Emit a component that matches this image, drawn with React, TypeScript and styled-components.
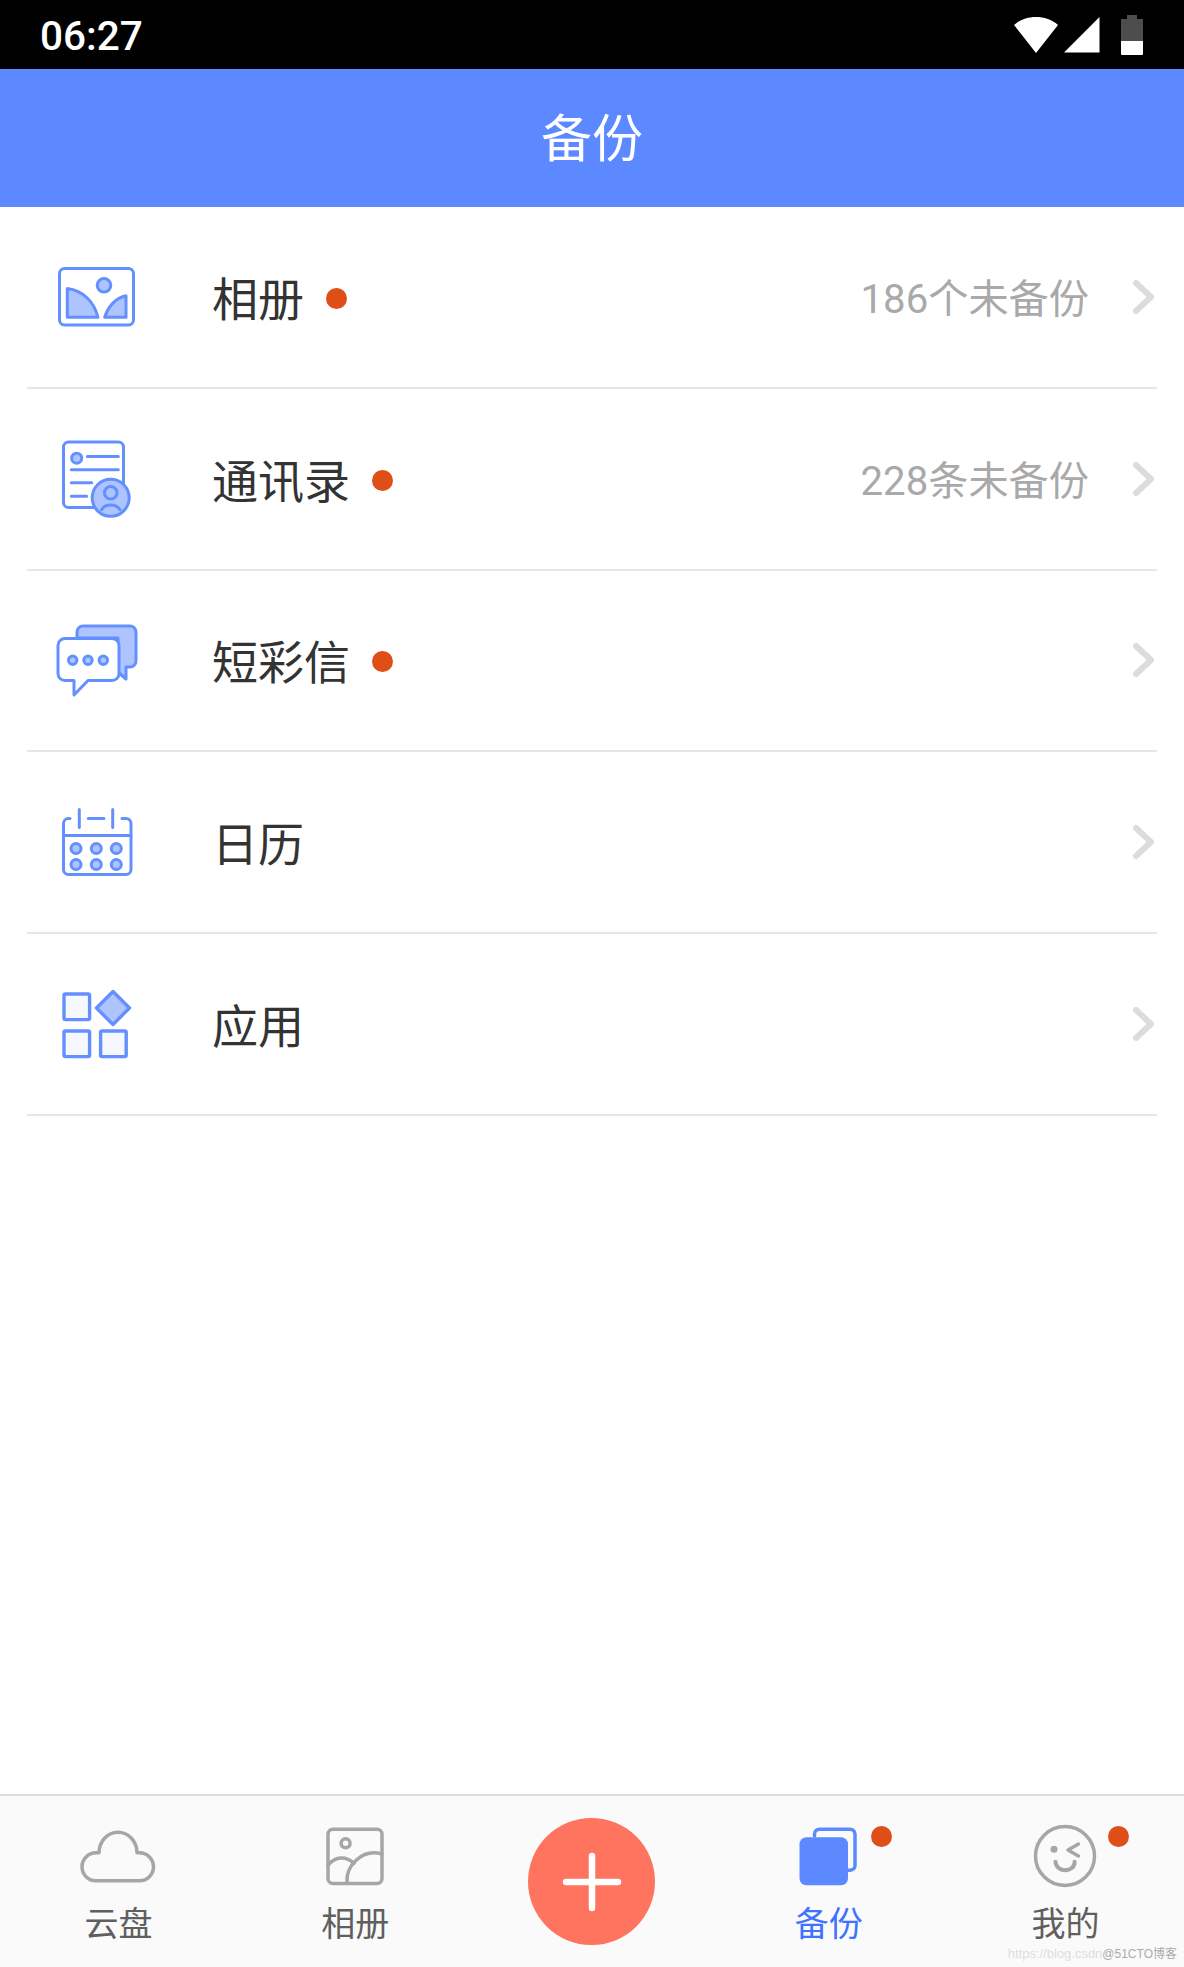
import React from 'react';
import styled, { createGlobalStyle } from 'styled-components';

const GlobalStyle = createGlobalStyle`
    html, body {
        margin: 0;
        padding: 0;
        background: #fff;
    }
    * {
        box-sizing: border-box;
    }
`;

const Page = styled.div`
    width: 1184px;
    height: 1967px;
    position: relative;
    display: flex;
    flex-direction: column;
    overflow: hidden;
    background: #fff;
    font-family: Roboto, "Noto Sans CJK SC", sans-serif;
`;

const StatusBar = styled.div`
    height: 69px;
    flex: none;
    display: flex;
    align-items: center;
    justify-content: space-between;
    padding: 0 41px 0 40px;
    background: #000;
`;

const Clock = styled.span`
    padding-top: 4px;
    font-size: 40.5px;
    font-weight: 500;
    line-height: 65px;
    color: #fff;
`;

const StatusIcons = styled.div`
    display: flex;
    align-items: center;
    gap: 6px;
`;

const BatteryIcon = styled.svg`
    margin-left: 15px;
`;

const Header = styled.header`
    height: 138px;
    flex: none;
    display: flex;
    align-items: center;
    justify-content: center;
    padding-bottom: 6px;
    background: #5c89ff;
`;

const Title = styled.h1`
    margin: 0;
    font-size: 51px;
    font-weight: 400;
    color: #fff;
`;

const List = styled.main`
    flex: 1;
    padding: 0 27px;
`;

const Row = styled.div`
    height: 181.8px;
    display: flex;
    align-items: center;
    padding: 0 2px 0 24px;
    border-bottom: 2px solid #e6e6e6;
`;

const RowIcon = styled.svg`
    width: 90px;
    height: 90px;
    flex: none;
    margin-right: 71px;
    fill: none;
    stroke: #6490ff;
    stroke-width: 3;
    stroke-linecap: round;
    stroke-linejoin: round;
`;

const RowLabel = styled.span`
    padding-bottom: 2px;
    font-size: 46px;
    color: #333;
`;

const Dot = styled.i`
    width: 21px;
    height: 21px;
    flex: none;
    margin: 3px 0 0 22px;
    border-radius: 50%;
    background: #e04e17;
`;

const Count = styled.span`
    margin-left: auto;
    margin-right: 42px;
    padding-bottom: 2px;
    font-size: 40.2px;
    color: #a9a9a9;
`;

const Chevron = styled.svg<{ $alone: boolean }>`
    width: 24px;
    height: 36px;
    flex: none;
    margin-left: ${p => (p.$alone ? 'auto' : '0')};
    fill: none;
    stroke: #dcdcdc;
    stroke-width: 6;
    stroke-linecap: round;
    stroke-linejoin: round;
`;

const TabBar = styled.nav`
    height: 173px;
    flex: none;
    display: grid;
    grid-template-columns: repeat(5, 1fr);
    border-top: 2px solid #dcdcdc;
    background: #fafafa;
`;

const Tab = styled.div<{ $active?: boolean }>`
    position: relative;
    display: flex;
    flex-direction: column;
    align-items: center;
    padding-top: 26px;
    font-size: 34px;
    line-height: 40px;
    color: ${p => (p.$active ? '#3f72ff' : '#5f5f5f')};
`;

const TabIcon = styled.svg`
    width: 80px;
    height: 70px;
    margin-bottom: 12px;
    fill: none;
    stroke: #a6a6a6;
    stroke-width: 3.5;
    stroke-linecap: round;
    stroke-linejoin: round;
`;

const TabBadge = styled.i`
    position: absolute;
    top: 30px;
    left: calc(50% + 42px);
    width: 21px;
    height: 21px;
    border-radius: 50%;
    background: #e04e17;
`;

const Fab = styled.div`
    justify-self: center;
    width: 127px;
    height: 127px;
    margin-top: 22px;
    display: flex;
    align-items: center;
    justify-content: center;
    border-radius: 50%;
    background: #ff745e;
`;

const Watermark = styled.div`
    position: absolute;
    right: 7px;
    bottom: 5px;
    display: flex;
    font-family: "Liberation Sans", "Noto Sans CJK SC", sans-serif;
    line-height: 16px;
    white-space: nowrap;
`;

const WatermarkLink = styled.span`
    font-size: 13px;
    color: #dedede;
`;

const WatermarkSite = styled.span`
    font-size: 12px;
    color: #aaa;
`;

const AlbumIcon = () => (
    <RowIcon viewBox="0 0 90 90">
        <rect x="8.500" y="16.500" width="74" height="56.500" rx="5" />
        <circle cx="53" cy="33.300" r="6.800" fill="#adc4ff" />
        <path d="M16.300 36.500C32 38.500 43 49.500 47 65.300H16.300Z" fill="#adc4ff" />
        <path d="M75 43.700C65 45.500 57 54.500 53.700 65.300H75Z" fill="#adc4ff" />
    </RowIcon>
);

const ContactsIcon = () => (
    <RowIcon viewBox="0 0 90 90">
        <rect x="12.500" y="8" width="60" height="65.500" rx="5" />
        <circle cx="25.700" cy="24.200" r="5" fill="#adc4ff" />
        <path d="M36.300 22.500H67.300M20.300 35.800H67.300M20.300 48.800H40.700M20.300 62.200H35.700" />
        <circle cx="59.700" cy="63.800" r="18.500" fill="#adc4ff" />
        <circle cx="59.700" cy="58.800" r="6.300" />
        <path d="M50.700 75.700C54 69.500 65 69.500 69 75.700" />
    </RowIcon>
);

const MessageIcon = () => (
    <RowIcon viewBox="0 0 90 90">
        <path
            d="M26 23V17A6 6 0 0 1 32 11H79A6 6 0 0 1 85 17V46A6 6 0 0 1 79 52H75V64L67 57V23H26Z"
            fill="#adc4ff"
        />
        <path
            d="M14 23.500H61A7 7 0 0 1 68 30.500V58.500A7 7 0 0 1 61 65.500H37L23 80V65.500H14A7 7 0 0 1 7 58.500V30.500A7 7 0 0 1 14 23.500Z"
            fill="#fff"
        />
        <circle cx="21.700" cy="45.200" r="4.200" fill="#adc4ff" />
        <circle cx="37" cy="45.200" r="4.200" fill="#adc4ff" />
        <circle cx="52.300" cy="45.200" r="4.200" fill="#adc4ff" />
    </RowIcon>
);

const CalendarIcon = () => (
    <RowIcon viewBox="0 0 90 90">
        <path d="M19 21.500H17A5 5 0 0 0 12.500 26.500V72.500A5 5 0 0 0 17 77.500H75A5 5 0 0 0 80 72.500V26.500A5 5 0 0 0 75 21.500H71" />
        <path d="M28.300 12.500V30.500M61.700 12.500V30.500M37.300 21.500H53M12.500 38.500H80" />
        {[25, 45.3, 65.3].map(cx =>
            [51.5, 67.5].map(cy => <circle key={`${cx}-${cy}`} cx={cx} cy={cy} r="5" fill="#adc4ff" />)
        )}
    </RowIcon>
);

const AppsIcon = () => (
    <RowIcon viewBox="0 0 90 90">
        <rect x="13" y="15" width="25.600" height="25.600" rx="1.500" fill="#f5f8ff" strokeWidth="3.400" />
        <rect x="13" y="52" width="25.600" height="25.600" rx="1.500" fill="#f5f8ff" strokeWidth="3.400" />
        <rect x="49.600" y="52" width="25.600" height="25.600" rx="1.500" fill="#f5f8ff" strokeWidth="3.400" />
        <path d="M62 12.500L78.500 29L62 45.500L45.500 29Z" fill="#adc4ff" strokeWidth="3.400" />
    </RowIcon>
);

const rows = [
    { label: '相册', dot: true, count: '186个未备份', Icon: AlbumIcon },
    { label: '通讯录', dot: true, count: '228条未备份', Icon: ContactsIcon },
    { label: '短彩信', dot: true, Icon: MessageIcon },
    { label: '日历', Icon: CalendarIcon },
    { label: '应用', Icon: AppsIcon },
];

export default function App() {
    return (
        <Page>
            <GlobalStyle />
            <StatusBar>
                <Clock>06:27</Clock>
                <StatusIcons>
                    <svg width="44" height="36" viewBox="0 0 44 36">
                        <path d="M22 36L0 8C6 2.500 14 0 22 0S38 2.500 44 8Z" fill="#fff" />
                    </svg>
                    <svg width="36" height="36" viewBox="0 0 36 36">
                        <path d="M35.500 0V35.500H0Z" fill="#fff" />
                    </svg>
                    <BatteryIcon width="22" height="40" viewBox="0 0 22 40">
                        <path d="M6 0H16V4H22V26H0V4H6Z" fill="#4d4d4d" />
                        <path d="M0 26H22V39A1 1 0 0 1 21 40H1A1 1 0 0 1 0 39Z" fill="#fff" />
                    </BatteryIcon>
                </StatusIcons>
            </StatusBar>
            <Header>
                <Title>备份</Title>
            </Header>
            <List>
                {rows.map(({ label, dot, count, Icon }) => (
                    <Row key={label}>
                        <Icon />
                        <RowLabel>{label}</RowLabel>
                        {dot && <Dot />}
                        {count && <Count>{count}</Count>}
                        <Chevron $alone={!count} viewBox="0 0 24 36">
                            <path d="M5 4L20 18L5 32" />
                        </Chevron>
                    </Row>
                ))}
            </List>
            <TabBar>
                <Tab>
                    <TabIcon viewBox="0 0 80 70">
                        <path d="M18 58.800H61.500A14 14 0 0 0 61.500 30.800H59A19 20.600 0 0 0 21 30.800H18A14 14 0 0 0 18 58.800Z" />
                    </TabIcon>
                    云盘
                </Tab>
                <Tab>
                    <TabIcon viewBox="0 0 80 70">
                        <rect x="13" y="7.200" width="54" height="54.300" rx="5" />
                        <circle cx="30.600" cy="21.300" r="4.500" />
                        <path d="M13 43C21 34 31 34 39 41.300" />
                        <path d="M32 60C31 44 47 26 67 32" />
                    </TabIcon>
                    相册
                </Tab>
                <Fab>
                    <svg width="60" height="60" viewBox="0 0 60 60">
                        <path d="M30 4V56M4 30H56" stroke="#fff" strokeWidth="6.500" strokeLinecap="round" />
                    </svg>
                </Fab>
                <Tab $active>
                    <TabIcon viewBox="0 0 80 70">
                        <path
                            d="M25.500 14V12A5 5 0 0 1 30.500 7.200H61A5 5 0 0 1 66 12V44A5 5 0 0 1 61 48.200H59"
                            stroke="#5c89ff"
                        />
                        <rect x="10.500" y="15.300" width="48.500" height="48" rx="7" fill="#5c89ff" stroke="none" />
                    </TabIcon>
                    备份
                    <TabBadge />
                </Tab>
                <Tab>
                    <TabIcon viewBox="0 0 80 70">
                        <circle cx="39" cy="34" r="29.500" />
                        <circle cx="28" cy="27.300" r="3.500" fill="#a6a6a6" stroke="none" />
                        <path d="M52.400 22L42 28L52.400 34" strokeWidth="3.500" />
                        <path d="M29.500 39.700C30 51 49 51 48.600 39.700" strokeWidth="4" />
                    </TabIcon>
                    我的
                    <TabBadge />
                </Tab>
            </TabBar>
            <Watermark>
                <WatermarkLink>https://blog.csdn</WatermarkLink>
                <WatermarkSite>@51CTO博客</WatermarkSite>
            </Watermark>
        </Page>
    );
}
